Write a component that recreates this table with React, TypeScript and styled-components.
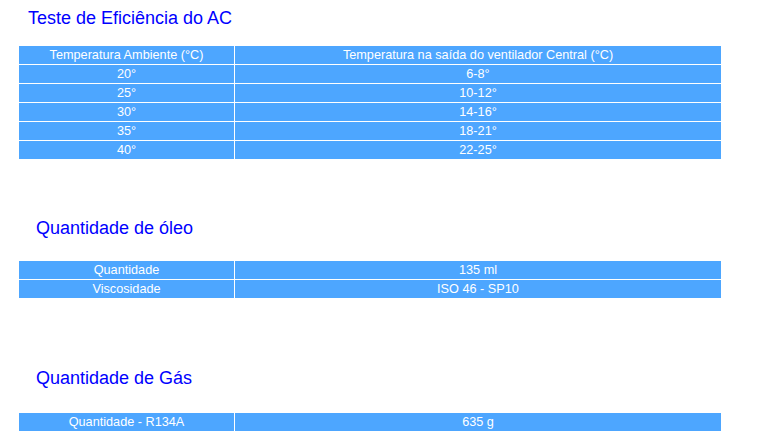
import React from 'react';
import styled, { createGlobalStyle } from 'styled-components';

const GlobalStyle = createGlobalStyle`
  html, body {
    margin: 0;
    padding: 0;
    background: #ffffff;
  }
`;

const efficiency = [
  ['20°', '6-8°'],
  ['25°', '10-12°'],
  ['30°', '14-16°'],
  ['35°', '18-21°'],
  ['40°', '22-25°'],
];

const oil = [
  ['Quantidade', '135 ml'],
  ['Viscosidade', 'ISO 46 - SP10'],
];

const gas = [['Quantidade - R134A', '635 g']];

const App: React.FunctionComponent = () => {
  return (
    <Page>
      <GlobalStyle />
      <Section $top={8}>
        <Title $indent={9}>Teste de Eficiência do AC</Title>
        <Grid $top={18}>
          <Cell>Temperatura Ambiente (°C)</Cell>
          <Cell>Temperatura na saída do ventilador Central (°C)</Cell>
          {efficiency.map(([a, b]) => (
            <React.Fragment key={a}>
              <Cell>{a}</Cell>
              <Cell>{b}</Cell>
            </React.Fragment>
          ))}
        </Grid>
      </Section>
      <Section $top={59}>
        <Title $indent={17}>Quantidade de óleo</Title>
        <Grid $top={23}>
          {oil.map(([a, b]) => (
            <React.Fragment key={a}>
              <Cell>{a}</Cell>
              <Cell>{b}</Cell>
            </React.Fragment>
          ))}
        </Grid>
      </Section>
      <Section $top={70}>
        <Title $indent={17}>Quantidade de Gás</Title>
        <Grid $top={25}>
          {gas.map(([a, b]) => (
            <React.Fragment key={a}>
              <Cell>{a}</Cell>
              <Cell>{b}</Cell>
            </React.Fragment>
          ))}
        </Grid>
      </Section>
    </Page>
  );
};

export default App;

const Page = styled.div`
  width: 758px;
  height: 442px;
  padding-left: 19px;
  box-sizing: border-box;
  display: flex;
  flex-direction: column;
  font-family: 'Liberation Sans', Arial, sans-serif;
  overflow: hidden;
`;

const Section = styled.div<{ $top: number }>`
  display: flex;
  flex-direction: column;
  margin-top: ${(p) => p.$top}px;
`;

const Title = styled.div<{ $indent: number }>`
  color: #0000ff;
  font-size: 18px;
  line-height: 20px;
  font-weight: 400;
  padding-left: ${(p) => p.$indent}px;
`;

const Grid = styled.div<{ $top: number }>`
  display: grid;
  grid-template-columns: 215px 486px;
  grid-auto-rows: 18px;
  gap: 1px;
  margin-top: ${(p) => p.$top}px;
`;

const Cell = styled.div`
  background: #4da6ff;
  color: #ffffff;
  font-size: 12.7px;
  line-height: 18px;
  text-align: center;
  white-space: nowrap;
`;
